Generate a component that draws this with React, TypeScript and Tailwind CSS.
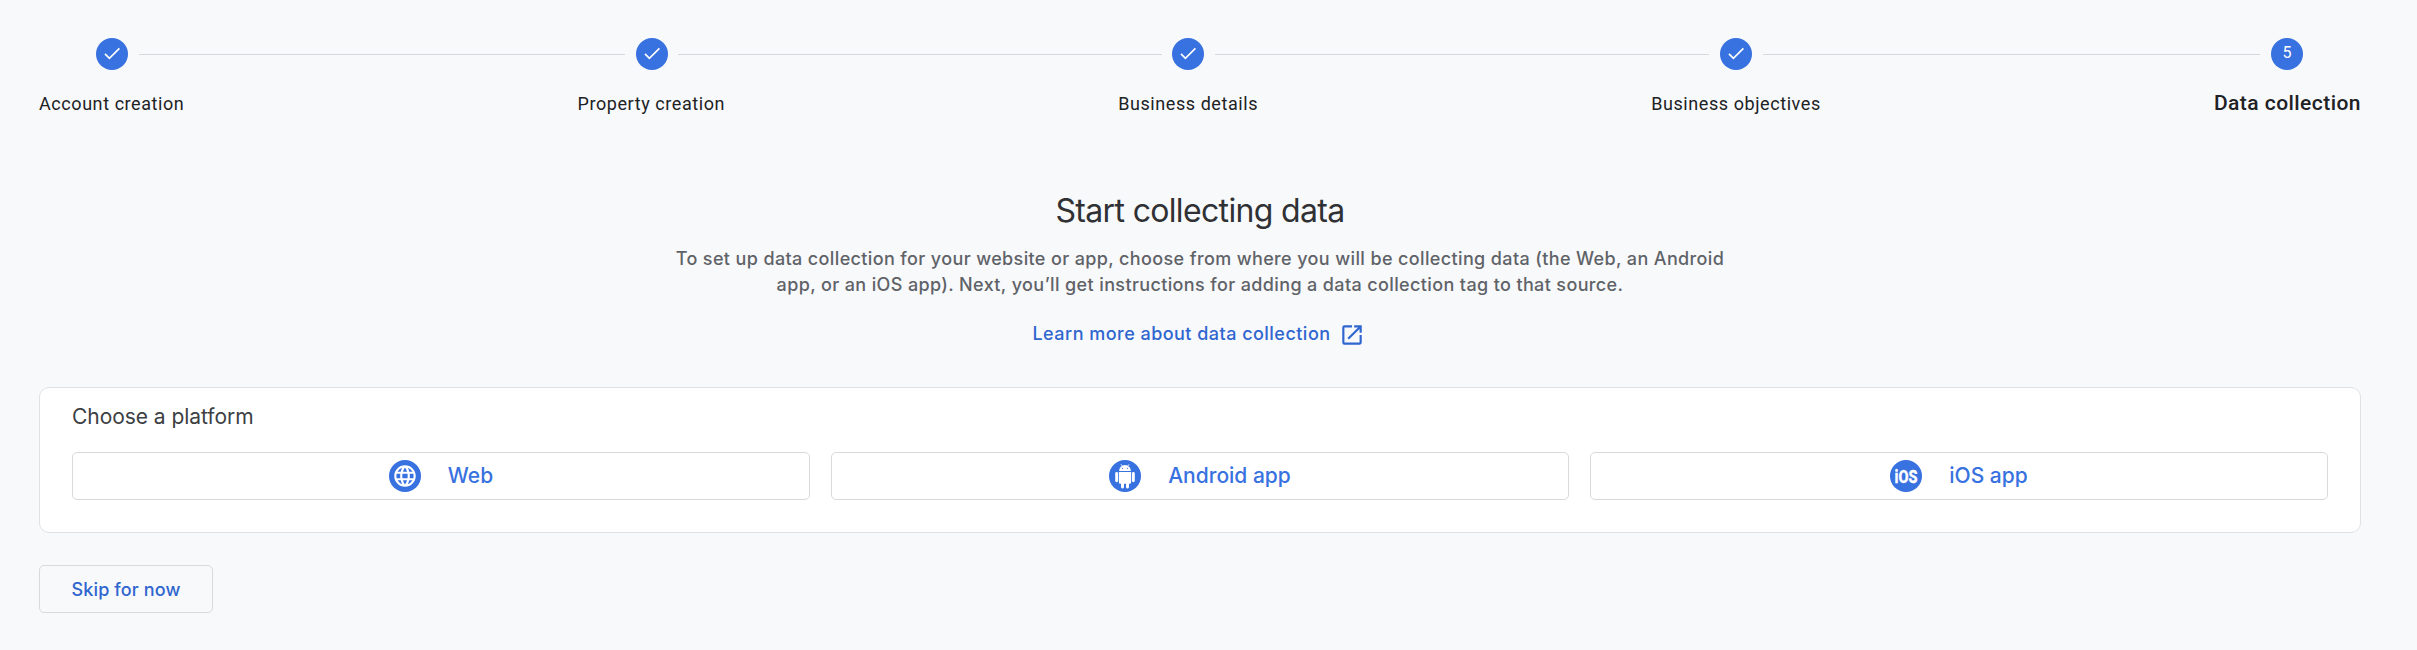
import { Fragment, type ReactNode } from "react";

const steps = [
  { label: "Account creation", line: "w-[486px] ml-[11px] mr-[11px]" },
  { label: "Property creation", line: "w-[484px] ml-[10px] mr-[10px]" },
  { label: "Business details", line: "w-[494px] ml-[11px] mr-[11px]" },
  { label: "Business objectives", line: "w-[497px] ml-[11px] mr-[11px]" },
  { label: "Data collection", line: "" },
];

function CheckIcon() {
  return (
    <svg width="32" height="32" viewBox="0 0 32 32" fill="none" stroke="#fff" strokeWidth="1.7">
      <path d="M9 15.8 L13.4 20.4 L23.4 10.4" />
    </svg>
  );
}

function Stepper() {
  return (
    <nav>
      <div className="flex h-8 items-center pl-[57px]">
        {steps.map((s, i) => (
          <Fragment key={s.label}>
            <div className="flex size-8 shrink-0 items-center justify-center rounded-full bg-[#3871e0] font-[Roboto,sans-serif] text-base text-white">
              {i < 4 ? <CheckIcon /> : <span className="pb-0.5">5</span>}
            </div>
            {i < 4 && <div className={`h-px shrink-0 bg-[#d6d9db] ${s.line}`} />}
          </Fragment>
        ))}
      </div>
      <div className="mt-[18px] flex h-8 items-baseline justify-between font-[Roboto,sans-serif] text-[18px] tracking-[0.57px] text-[#202124]">
        {steps.map((s, i) => (
          <span key={s.label} className={i === 4 ? "text-[21px] font-medium tracking-[0.45px]" : ""}>
            {s.label}
          </span>
        ))}
      </div>
    </nav>
  );
}

function ExternalIcon() {
  return (
    <svg width="26" height="26" viewBox="0 0 24 24" fill="#2f66cf">
      <path d="M19 19H5V5h7V3H5a2 2 0 0 0-2 2v14a2 2 0 0 0 2 2h14c1.100 0 2-.9 2-2v-7h-2v7zM14 3v2h3.590l-9.830 9.830 1.410 1.410L19 6.410V10h2V3h-7z" />
    </svg>
  );
}

function WebIcon() {
  return (
    <svg width="32" height="32" viewBox="0 0 32 32">
      <circle cx="16" cy="16" r="16" fill="#3871e0" />
      <g transform="translate(3.1 3.1) scale(1.075)" fill="#fff">
        <path d="M11.990 2C6.470 2 2 6.480 2 12s4.470 10 9.990 10C17.520 22 22 17.520 22 12S17.520 2 11.990 2zm6.930 6h-2.950a15.650 15.650 0 0 0-1.380-3.560A8.030 8.030 0 0 1 18.920 8zM12 4.040c.830 1.200 1.480 2.530 1.910 3.960h-3.820c.430-1.430 1.080-2.760 1.910-3.960zM4.260 14C4.100 13.360 4 12.690 4 12s.1-1.360.260-2h3.380c-.080.660-.140 1.320-.140 2s.060 1.340.140 2H4.260zm.820 2h2.950c.320 1.250.780 2.450 1.380 3.560A7.987 7.987 0 0 1 5.080 16zm2.950-8H5.080a7.987 7.987 0 0 1 4.330-3.560A15.650 15.650 0 0 0 8.030 8zM12 19.960c-.830-1.200-1.480-2.530-1.910-3.960h3.820c-.430 1.430-1.080 2.760-1.910 3.960zM14.340 14H9.660c-.090-.660-.160-1.320-.160-2s.070-1.350.160-2h4.680c.090.650.160 1.320.160 2s-.070 1.340-.160 2zm.250 5.560c.6-1.110 1.060-2.310 1.380-3.560h2.950a8.030 8.030 0 0 1-4.330 3.560zM16.360 14c.080-.660.140-1.320.140-2s-.060-1.340-.140-2h3.380c.160.640.260 1.310.260 2s-.1 1.360-.260 2h-3.380z" />
      </g>
    </svg>
  );
}

function AndroidIcon() {
  return (
    <svg width="32" height="32" viewBox="0 0 32 32">
      <circle cx="16" cy="16" r="16" fill="#3871e0" />
      <g fill="#fff">
        <path d="M10.100 10.900a5.900 6 0 0 1 11.800 0z" />
        <path d="M12 4.300l1.500 2M20 4.300l-1.500 2" stroke="#fff" strokeWidth="0.900" />
        <path d="M9.900 12h12.200v10.400a1.300 1.300 0 0 1-1.300 1.300h-9.600a1.300 1.300 0 0 1-1.300-1.300z" />
        <rect x="6.200" y="12" width="2.900" height="10.300" rx="1.450" />
        <rect x="22.900" y="12" width="2.900" height="10.300" rx="1.450" />
        <rect x="12" y="20" width="3" height="8.400" rx="1.300" />
        <rect x="17" y="20" width="3" height="8.400" rx="1.300" />
      </g>
      <circle cx="13.500" cy="8.300" r="0.600" fill="#3871e0" />
      <circle cx="18.500" cy="8.300" r="0.600" fill="#3871e0" />
    </svg>
  );
}

function IosIcon() {
  return (
    <svg width="32" height="32" viewBox="0 0 32 32" className="overflow-visible">
      <circle cx="16" cy="16" r="16" fill="#3871e0" />
      <text
        x="4.500"
        y="22.700"
        fill="#fff"
        stroke="#fff"
        strokeWidth="0.300"
        fontFamily="Roboto, sans-serif"
        fontWeight="800"
        fontSize="18.500"
        textLength="23"
        lengthAdjust="spacingAndGlyphs"
      >
        iOS
      </text>
    </svg>
  );
}

function Platform({ icon, label }: { icon: ReactNode; label: string }) {
  return (
    <button className="flex h-12 items-center justify-center gap-[27px] rounded-[5px] border border-[#d8dadc] text-[21px] font-medium text-[#3871e0]">
      {icon}
      <span>{label}</span>
    </button>
  );
}

export default function App() {
  return (
    <div className="h-[650px] w-[2417px] bg-[#f8f9fb] pt-[38px] pr-[56px] pl-[39px] font-[Inter,sans-serif]">
      <Stepper />
      <section className="flex flex-col items-center text-center">
        <h1 className="mt-[69px] text-[32px] leading-[44px] tracking-[-0.66px] text-[#303134]">Start collecting data</h1>
        <p className="mt-[13px] text-[18px] leading-[26px] font-medium tracking-[0.37px] text-[#5f6368]">
          To set up data collection for your website or app, choose from where you will be collecting data (the Web, an Android
          <br />
          app, or an iOS app). Next, you’ll get instructions for adding a data collection tag to that source.
        </p>
        <a className="mt-[22px] mr-[3px] flex h-[26px] items-center gap-[8px] text-[18px] font-medium tracking-[0.47px] text-[#2f66cf]">
          Learn more about data collection
          <span className="pt-1">
            <ExternalIcon />
          </span>
        </a>
      </section>
      <section className="mt-[41px] h-[146px] rounded-[10px] border border-[#dfe1e3] bg-white px-8 pt-[14px]">
        <h2 className="h-[30px] text-[21px] leading-[30px] tracking-[-0.05px] text-[#3c4043]">Choose a platform</h2>
        <div className="mt-[20px] grid grid-cols-3 gap-[21px]">
          <Platform icon={<WebIcon />} label="Web" />
          <Platform icon={<AndroidIcon />} label="Android app" />
          <Platform icon={<IosIcon />} label="iOS app" />
        </div>
      </section>
      <button className="mt-8 flex h-12 w-[174px] items-center justify-center rounded-[5px] border border-[#d8dadc] text-[18px] font-medium tracking-[0.12px] text-[#2f66cf]">
        Skip for now
      </button>
    </div>
  );
}
